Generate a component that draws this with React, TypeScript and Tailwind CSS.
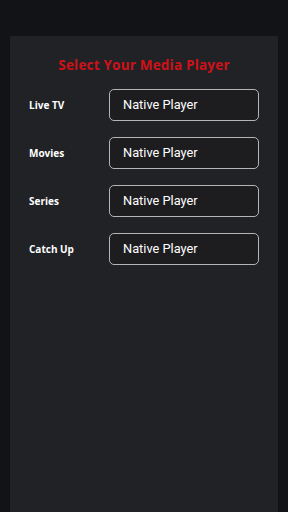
export default function App() {
  const rows = ['Live TV', 'Movies', 'Series', 'Catch Up'];

  return (
    <div className="w-[288px] h-[512px] bg-[#111317] pt-[36px] px-[10px] overflow-hidden">
      {/* Settings panel */}
      <div className="h-full bg-[#212226] pt-[20px]">
        <h1 className="text-center text-[13.5px] font-bold text-[#cf1118] tracking-[0.2px] leading-[18px] font-['Open_Sans',sans-serif]">
          Select Your Media Player
        </h1>

        <div className="mt-[15px] flex flex-col gap-[16px]">
          {rows.map((label) => (
            <div key={label} className="flex items-center pl-[19px]">
              <span className="w-[80px] text-[10px] font-bold text-white font-['Open_Sans',sans-serif]">
                {label}
              </span>
              <div className="w-[150px] h-[32px] flex items-center pl-[13px] border border-[#b5b5b5] rounded-[5px] bg-[#1d1d1f]">
                <span className="text-[12.8px] text-white font-['Roboto',sans-serif]">Native Player</span>
              </div>
            </div>
          ))}
        </div>
      </div>
    </div>
  );
}
